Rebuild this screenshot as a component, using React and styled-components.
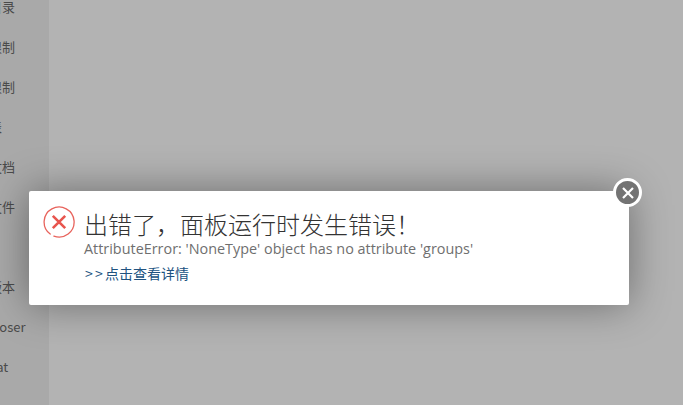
import React from "react";
import styled, { createGlobalStyle } from "styled-components";

const GlobalStyle = createGlobalStyle`
  html, body {
    margin: 0;
    padding: 0;
    height: 100%;
    overflow: hidden;
    background: #b3b3b3;
  }
`;

const menu = ["文件目录", "系统限制", "访问限制", "日志表", "接口文档", "配置文件", "", "查看版本", "Composer", "Wechat"];

const App = () => {
  return (
    <Page>
      <GlobalStyle />
      <Sidebar>
        {menu.map((label, i) => (
          <MenuItem key={i}>{label}</MenuItem>
        ))}
      </Sidebar>
      <Overlay>
        <Dialog>
          <ErrorIcon viewBox="0 0 32 32">
            <path
              d="M7.2 28.1A15 15 0 1 1 10.9 30.1"
              fill="none"
              stroke="#e8635c"
              strokeWidth="1.3"
              strokeLinecap="round"
            />
            <path
              d="M9.8 9.8L22.2 22.2M22.2 9.8L9.8 22.2"
              fill="none"
              stroke="#e8554e"
              strokeWidth="2.6"
            />
          </ErrorIcon>
          <Body>
            <Title>出错了，面板运行时发生错误！</Title>
            <Message>AttributeError: 'NoneType' object has no attribute 'groups'</Message>
            <DetailLink>
              <Arrows>&gt;&gt;</Arrows>点击查看详情
            </DetailLink>
          </Body>
          <CloseButton>
            <svg viewBox="0 0 16 16" width="16" height="16">
              <path d="M3 3L13 13M13 3L3 13" stroke="#fff" strokeWidth="2.2" />
            </svg>
          </CloseButton>
        </Dialog>
      </Overlay>
    </Page>
  );
};

export default App;

const Page = styled.div`
  width: 683px;
  height: 405px;
  position: relative;
  overflow: hidden;
  display: flex;
  background: #b3b3b3;
`;

const Sidebar = styled.nav`
  width: 49px;
  height: 405px;
  flex-shrink: 0;
  overflow: hidden;
  background: #a9a9a9;
  display: flex;
  flex-direction: column;
  box-sizing: border-box;
`;

const MenuItem = styled.div`
  height: 40px;
  line-height: 13px;
  flex-shrink: 0;
  margin-left: -37px;
  white-space: nowrap;
  font-family: "Noto Sans CJK SC", "Open Sans", sans-serif;
  font-size: 13px;
  color: #4a4a4a;
`;

const Overlay = styled.div`
  position: absolute;
  inset: 0;
  padding: 191px 0 0 29px;
  box-sizing: border-box;
`;

const Dialog = styled.div`
  position: relative;
  width: 600px;
  height: 114px;
  display: flex;
  box-sizing: border-box;
  padding: 15px 16px 0 14px;
  background: #fff;
  border-radius: 2px;
  box-shadow: 0 0 42px rgba(0, 0, 0, 0.4);
`;

const ErrorIcon = styled.svg`
  width: 32px;
  height: 32px;
  flex-shrink: 0;
  margin-right: 9px;
`;

const Body = styled.div`
  display: flex;
  flex-direction: column;
  align-items: flex-start;
  padding-top: 1px;
`;

const Title = styled.div`
  font-family: "Noto Sans CJK SC", sans-serif;
  font-size: 24px;
  font-weight: 300;
  line-height: 34px;
  color: #333;
  white-space: nowrap;
`;

const Message = styled.div`
  font-family: "Open Sans", sans-serif;
  font-size: 14.4px;
  line-height: 18px;
  margin-top: -1px;
  color: #6f6f6f;
  white-space: nowrap;
`;

const DetailLink = styled.a`
  font-family: "Noto Sans CJK SC", sans-serif;
  font-size: 14px;
  line-height: 18px;
  margin-top: 6px;
  color: #20527f;
`;

const Arrows = styled.span`
  letter-spacing: 2.2px;
  margin-left: 1px;
`;

const CloseButton = styled.div`
  position: absolute;
  top: -13px;
  right: -13px;
  width: 23px;
  height: 23px;
  border: 3px solid #fff;
  border-radius: 50%;
  background: #737373;
  display: flex;
  align-items: center;
  justify-content: center;
`;
